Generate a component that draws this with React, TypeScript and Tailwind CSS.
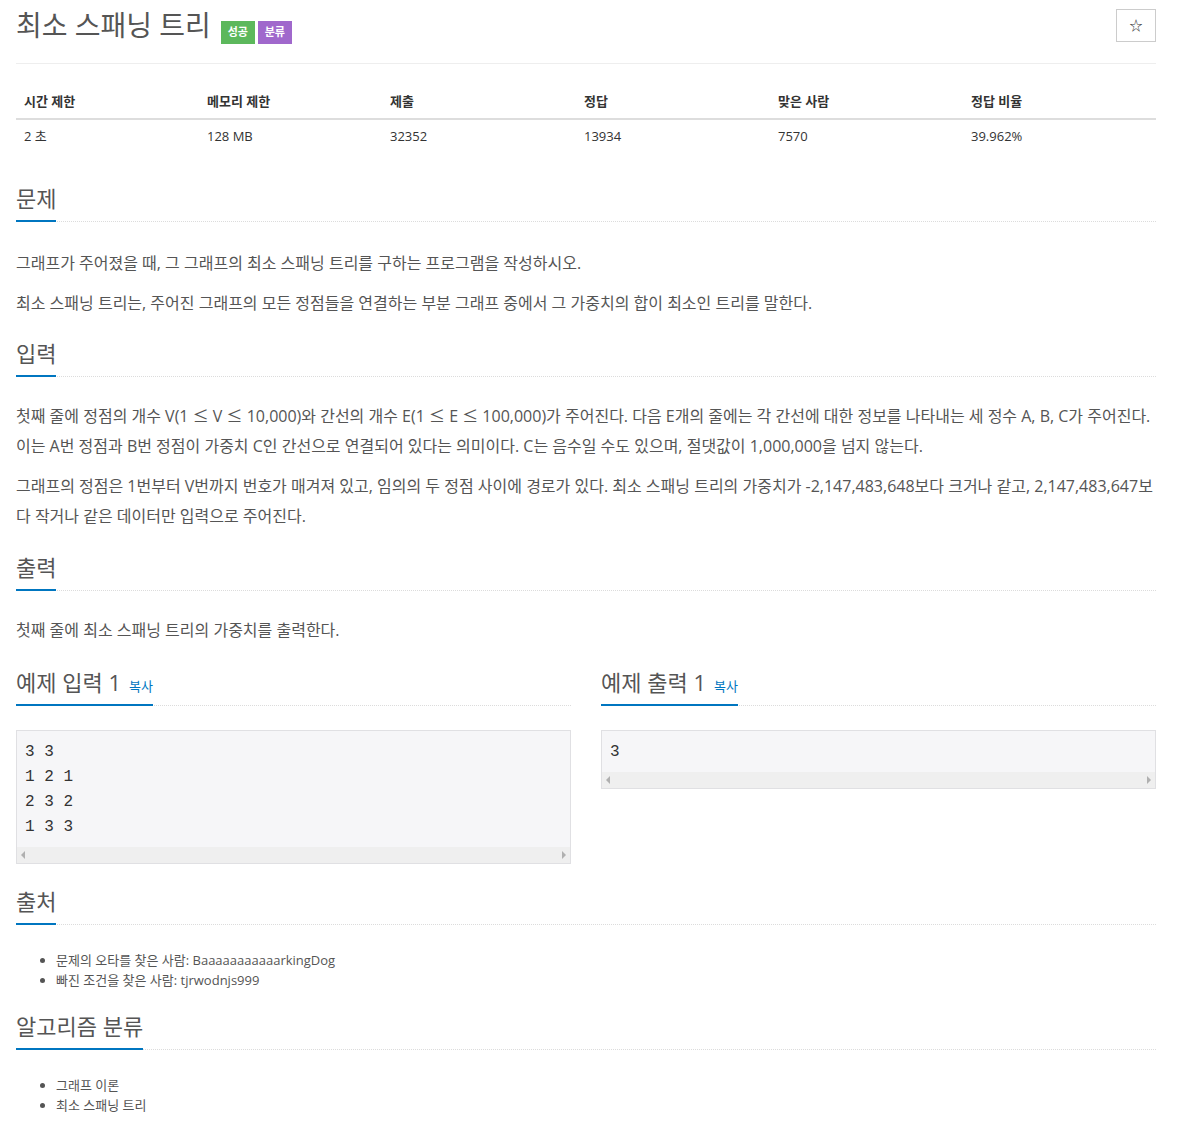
import React from 'react';

const FONT = { fontFamily: '"Open Sans", "Noto Sans CJK KR", sans-serif' };

const stats = [
  { label: '시간 제한', value: '2 초', w: 'w-[183px]' },
  { label: '메모리 제한', value: '128 MB', w: 'w-[183px]' },
  { label: '제출', value: '32352', w: 'w-[194px]' },
  { label: '정답', value: '13934', w: 'w-[194px]' },
  { label: '맞은 사람', value: '7570', w: 'w-[193px]' },
  { label: '정답 비율', value: '39.962%', w: 'w-[193px]' },
];

const Headline = ({ children }: { children: React.ReactNode }) => (
  <div className="flex border-b border-dotted border-[#dcdcdc]">
    <h2 className="-mb-px flex items-baseline gap-[8px] border-b-2 border-[#0076c0] pb-[10px] text-[22px] leading-[24px] font-normal text-[#555]">
      {children}
    </h2>
  </div>
);

// full-width "≤" as in the reference rendering
const Le = () => (
  <span className="inline-block w-[16px] text-center font-['Noto_Sans_CJK_KR']">≤</span>
);

const ScrollBar = () => (
  <div className="flex h-[16px] items-center justify-between bg-[#efefef] px-[4px]">
    <span className="h-0 w-0 border-y-[4px] border-r-[4px] border-y-transparent border-r-[#b0b0b0]" />
    <span className="h-0 w-0 border-y-[4px] border-l-[4px] border-y-transparent border-l-[#b0b0b0]" />
  </div>
);

const Sample = ({ title, lines }: { title: string; lines: string[] }) => (
  <div className="flex-1">
    <Headline>
      <span>{title}</span>
      <span className="text-[13px] leading-none text-[#0076c0]">복사</span>
    </Headline>
    <div className="mt-[24px] border border-[#e0e0e3] bg-[#f6f6f8]">
      <pre
        className="px-[8px] pt-[9px] pb-[7px] text-[16px] leading-[25px] text-[#333]"
        style={{ fontFamily: '"Liberation Mono", "DejaVu Sans Mono", monospace' }}
      >
        {lines.join('\n')}
      </pre>
      <ScrollBar />
    </div>
  </div>
);

export default function App() {
  return (
    <div className="min-h-[1128px] bg-white text-[#555]" style={FONT}>
      <div className="mx-[16px] w-[1140px]">
        <div className="flex items-start justify-between border-b border-[#eee] pb-[19px]">
          <div className="flex items-start gap-[10px] pt-[8px]">
            <h1 className="text-[28px] leading-[34px] font-normal text-[#555]">최소 스패닝 트리</h1>
            <div className="mt-[13px] flex gap-[3px]">
              <span className="flex h-[23px] w-[34px] items-center justify-center bg-[#5cb85c] text-[11px] font-bold text-white">성공</span>
              <span className="flex h-[23px] w-[34px] items-center justify-center bg-[#a068cc] text-[11px] font-bold text-white">분류</span>
            </div>
          </div>
          <button className="mt-[9px] flex h-[33px] w-[40px] items-center justify-center border border-[#ccc] bg-white text-[13px] text-[#333]">
            ☆
          </button>
        </div>

        <div className="mt-[20px] text-[13px] text-[#333]">
          <div className="flex border-b-2 border-[#ddd]">
            {stats.map((s) => (
              <div key={s.label} className={`${s.w} px-[8px] py-[7px] leading-[20px] font-bold`}>
                {s.label}
              </div>
            ))}
          </div>
          <div className="flex">
            {stats.map((s) => (
              <div key={s.label} className={`${s.w} px-[8px] pt-[6px] pb-[8px] leading-[20px]`}>
                {s.value}
              </div>
            ))}
          </div>
        </div>

        <section className="mt-[32px]">
          <Headline>문제</Headline>
          <div className="mt-[26px] flex flex-col gap-[10px] break-all text-[16px] leading-[30px]">
            <p>그래프가 주어졌을 때, 그 그래프의 최소 스패닝 트리를 구하는 프로그램을 작성하시오.</p>
            <p>최소 스패닝 트리는, 주어진 그래프의 모든 정점들을 연결하는 부분 그래프 중에서 그 가중치의 합이 최소인 트리를 말한다.</p>
          </div>
        </section>

        <section className="mt-[23px]">
          <Headline>입력</Headline>
          <div className="mt-[23px] flex flex-col gap-[10px] break-all text-[16px] leading-[30px]">
            <p>
              첫째 줄에 정점의 개수 V(1 <Le /> V <Le /> 10,000)와 간선의 개수 E(1 <Le /> E <Le /> 100,000)가 주어진다. 다음 E개의 줄에는 각 간선에 대한 정보를 나타내는 세 정수 A, B, C가 주어진다. 이는 A번 정점과 B번 정점이 가중치 C인 간선으로 연결되어 있다는 의미이다. C는 음수일 수도 있으며, 절댓값이 1,000,000을 넘지 않는다.
            </p>
            <p>
              그래프의 정점은 1번부터 V번까지 번호가 매겨져 있고, 임의의 두 정점 사이에 경로가 있다. 최소 스패닝 트리의 가중치가 -2,147,483,648보다 크거나 같고, 2,147,483,647보다 작거나 같은 데이터만 입력으로 주어진다.
            </p>
          </div>
        </section>

        <section className="mt-[24px]">
          <Headline>출력</Headline>
          <div className="mt-[24px] break-all text-[16px] leading-[30px]">
            <p>첫째 줄에 최소 스패닝 트리의 가중치를 출력한다.</p>
          </div>
        </section>

        <div className="mt-[25px] flex items-start gap-[30px]">
          <Sample title="예제 입력 1" lines={['3 3', '1 2 1', '2 3 2', '1 3 3']} />
          <Sample title="예제 출력 1" lines={['3']} />
        </div>

        <section className="mt-[25px]">
          <Headline>출처</Headline>
          <ul className="mt-[25px] list-disc pl-[40px] text-[13px] leading-[20px] text-[#555]">
            <li>문제의 오타를 찾은 사람: BaaaaaaaaaaarkingDog</li>
            <li>빠진 조건을 찾은 사람: tjrwodnjs999</li>
          </ul>
        </section>

        <section className="mt-[24px] pb-[15px]">
          <Headline>알고리즘 분류</Headline>
          <ul className="mt-[25px] list-disc pl-[40px] text-[13px] leading-[20px] text-[#555]">
            <li>그래프 이론</li>
            <li>최소 스패닝 트리</li>
          </ul>
        </section>
      </div>
    </div>
  );
}
